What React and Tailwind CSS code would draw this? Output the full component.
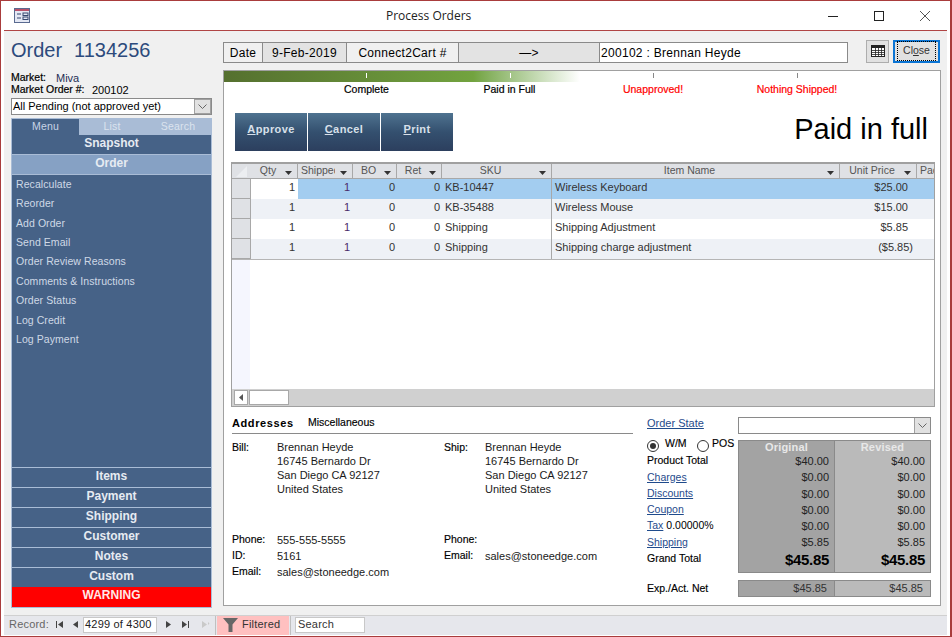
import { Fragment } from "react";

const menuLinks = [
  "Recalculate",
  "Reorder",
  "Add Order",
  "Send Email",
  "Order Review Reasons",
  "Comments & Instructions",
  "Order Status",
  "Log Credit",
  "Log Payment",
];

const bottomLinks = ["Items", "Payment", "Shipping", "Customer", "Notes", "Custom"];

const columns = [
  { label: "Qty", cls: "w-[47px]" },
  { label: "Shipped", cls: "w-[55px]", textCls: "ml-[3px] w-[34px]" },
  { label: "BO", cls: "w-[44px]" },
  { label: "Ret", cls: "w-[45px]" },
  { label: "SKU", cls: "w-[110px]" },
  { label: "Item Name", cls: "w-[288px]" },
  { label: "Unit Price", cls: "w-[77px]" },
];

const rows = [
  { sku: "KB-10447", name: "Wireless Keyboard", price: "$25.00" },
  { sku: "KB-35488", name: "Wireless Mouse", price: "$15.00" },
  { sku: "Shipping", name: "Shipping Adjustment", price: "$5.85" },
  { sku: "Shipping", name: "Shipping charge adjustment", price: "($5.85)" },
];

const totals = [
  { label: "Product Total", orig: "$40.00", rev: "$40.00" },
  { label: "Charges", orig: "$0.00", rev: "$0.00", link: true },
  { label: "Discounts", orig: "$0.00", rev: "$0.00", link: true },
  { label: "Coupon", orig: "$0.00", rev: "$0.00", link: true },
  { label: "Tax", orig: "$0.00", rev: "$0.00", link: true, extra: "0.00000%" },
  { label: "Shipping", orig: "$5.85", rev: "$5.85", link: true },
];

const SortArrow = () => (
  <svg width="7" height="4" viewBox="0 0 7 4" className="shrink-0 ml-auto mt-[3px]">
    <path d="M0 0h7L3.5 4z" fill="#333" />
  </svg>
);

const Chevron = () => (
  <svg width="9" height="5" viewBox="0 0 9 5" fill="none" stroke="#666">
    <path d="M.5.5l4 4 4-4" />
  </svg>
);

const NavIcon = ({ d, color = "#444" }) => (
  <svg width="9" height="9" viewBox="0 0 9 9">
    <path d={d} fill={color} />
  </svg>
);

const Radio = ({ checked }) => (
  <span className="w-[12px] h-[12px] rounded-full border border-[#333] bg-white flex items-center justify-center shrink-0">
    {checked && <span className="w-[6px] h-[6px] rounded-full bg-[#333]" />}
  </span>
);

const ActionButton = ({ first, rest }) => (
  <button className="w-[72px] h-[38px] pb-[5px] text-[11px] font-bold tracking-[0.4px] text-[#d8e0ea] bg-gradient-to-b from-[#4f7390] via-[#34506f] to-[#2c3f5e]">
    <span className="underline">{first}</span>
    {rest}
  </button>
);

export default function App() {
  return (
    <div className="w-[952px] h-[637px] box-border border border-r-2 border-[#a93c3c] bg-white px-[3px] flex flex-col text-[11px] text-black overflow-hidden font-['Liberation_Sans',Arial,sans-serif]">
      {/* title bar */}
      <div className="h-[30px] shrink-0 flex items-center border-b border-[#b04545] pl-[10px]">
        <svg width="17" height="16" viewBox="0 0 17 16">
          <rect x=".5" y=".5" width="15" height="14" fill="#e4e8f4" stroke="#5a6a90" />
          <rect x="1" y="1" width="14" height="2" fill="#b8506a" />
          <path d="M3 6h4M3 10h4" stroke="#34466e" />
          <rect x="9" y="5" width="5" height="2.5" fill="none" stroke="#34466e" />
          <rect x="9" y="9" width="5" height="2.5" fill="none" stroke="#34466e" />
        </svg>
        <div className="w-[355px] shrink-0" />
        <span className="text-[12px] text-[#222] font-['Open_Sans',sans-serif]">Process Orders</span>
        <div className="flex-1" />
        <svg width="116" height="12" viewBox="0 0 116 12" fill="none" stroke="#222" className="mr-[3px]">
          <path d="M0 6.5h10" />
          <rect x="46.5" y="1.5" width="9" height="9" />
          <path d="M92 1l10 10M102 1L92 11" stroke="#555" />
        </svg>
      </div>

      <div className="flex-1 min-h-0 bg-[#f0f0f0] flex pl-[7px]">
        {/* left column */}
        <div className="w-[201px] shrink-0 flex flex-col pt-[8px] pb-[7px]">
          <div className="flex items-center h-[22px] text-[20px] text-[#2c4a7c] leading-none">
            <span className="w-[63px]">Order</span>
            <span>1134256</span>
          </div>
          <div className="flex mt-[11px] h-[12px] items-center">
            <span className="w-[45px] text-[10.5px] [-webkit-text-stroke:0.2px_black]">Market:</span>
            <span className="text-[#1f2f55]">Miva</span>
          </div>
          <div className="flex h-[12px] items-center">
            <span className="w-[81px] text-[10.5px] [-webkit-text-stroke:0.2px_black]">Market Order #:</span>
            <span>200102</span>
          </div>
          <div className="mt-[2px] h-[17px] border border-[#8a8a8a] bg-white flex items-center justify-between">
            <span className="pl-[1px]">All Pending (not approved yet)</span>
            <span className="w-[17px] h-[15px] bg-[#e1e1e1] border border-[#a0a0a0] flex items-center justify-center">
              <Chevron />
            </span>
          </div>
          <div className="mt-[3px] flex-1 flex flex-col border border-[#a9bcd6] bg-[#466287] text-[#e6ebf2]">
            <div className="h-[16px] shrink-0 flex bg-[#a9bcd6] text-[10.5px] tracking-[0.2px] items-center">
              <span className="w-[67px] h-full bg-[#466287] text-[#c8d4e6] flex items-center justify-center">Menu</span>
              <span className="w-[66px] text-[#dbe3ee] text-center">List</span>
              <span className="w-[66px] text-[#dbe3ee] text-center">Search</span>
            </div>
            <div className="h-[20px] shrink-0 flex items-center justify-center pb-[3px] text-[12px] font-bold border-b border-[#a9bcd6]">Snapshot</div>
            <div className="h-[20px] shrink-0 flex items-center justify-center pb-[3px] text-[12px] font-bold bg-[#86a1c4] border-b border-[#a9bcd6]">Order</div>
            <div className="flex flex-col pl-[4px] text-[#cfd9e6] text-[10.5px] tracking-[0.07px]">
              {menuLinks.map((item) => (
                <div key={item} className="h-[19.4px] flex items-center">{item}</div>
              ))}
            </div>
            <div className="flex-1" />
            {bottomLinks.map((item) => (
              <div key={item} className="h-[20px] shrink-0 flex items-center justify-center pb-[4px] text-[12px] font-bold border-t border-[#a9bcd6]">{item}</div>
            ))}
            <div className="h-[20px] shrink-0 flex items-center justify-center pb-[4px] text-[12px] font-bold bg-[#ff0000] text-[#ffe8e8]">WARNING</div>
          </div>
        </div>

        {/* right column */}
        <div className="w-[718px] ml-[11px] shrink-0 flex flex-col pt-[8px]">
          <div className="flex h-[24px] items-center">
            <div className="flex h-[21px] border border-[#8a8a8a] text-[12px] tracking-[0.3px] mt-[3px]">
              <span className="w-[39px] flex items-center justify-center border-r border-[#8a8a8a]">Date</span>
              <span className="w-[84px] flex items-center justify-center bg-[#e3e3e3] border-r border-[#8a8a8a]">9-Feb-2019</span>
              <span className="w-[112px] flex items-center justify-center border-r border-[#8a8a8a]">Connect2Cart #</span>
              <span className="w-[141px] flex items-center justify-center bg-[#e3e3e3] border-r border-[#8a8a8a]">—&gt;</span>
              <span className="w-[247px] flex items-center pl-[1px] bg-white">200102 : Brennan Heyde</span>
            </div>
            <button className="ml-[18px] w-[23px] h-[23px] bg-[#e1e1e1] border border-[#adadad] flex items-center justify-center">
              <svg width="14" height="12" viewBox="0 0 14 12">
                <rect x=".5" y=".5" width="13" height="11" fill="#fff" stroke="#222" />
                <rect x="0" y="0" width="14" height="3" fill="#222" />
                <path d="M4.5 3v8M7.5 3v8M10.5 3v8M1 5.5h12M1 7.5h12M1 9.5h12" stroke="#222" strokeWidth=".8" />
              </svg>
            </button>
            <button className="ml-[4px] w-[47px] h-[23px] bg-[#e1e1e1] border-2 border-[#0a74d4] flex items-center justify-center text-[10.5px] text-[#333]">
              <span className="border border-dotted border-black px-[5px] py-[1px]">
                Cl<span className="underline">o</span>se
              </span>
            </button>
          </div>

          <div className="mt-[7px] w-[718px] h-[536px] bg-white border border-[#a0a0a0] flex flex-col">
            <div className="relative h-[11px] shrink-0">
              <div className="h-full w-[356px] bg-gradient-to-r from-[#55702f] via-[#72a33f] via-70% to-white" />
              <span className="absolute left-[142px] top-[2px] w-px h-[5px] bg-white" />
              <span className="absolute left-[286px] top-[2px] w-px h-[5px] bg-white" />
              <span className="absolute left-[429px] top-[2px] w-px h-[5px] bg-[#888]" />
              <span className="absolute left-[573px] top-[2px] w-px h-[5px] bg-[#888]" />
            </div>
            <div className="flex h-[16px] pl-[71px] items-center text-[10.5px] [-webkit-text-stroke:0.2px]">
              <span className="w-[143px] text-center">Complete</span>
              <span className="w-[143px] text-center">Paid in Full</span>
              <span className="w-[144px] text-center text-[#ff0000]">Unapproved!</span>
              <span className="w-[144px] text-center text-[#ff0000]">Nothing Shipped!</span>
            </div>
            <div className="flex h-[38px] mt-[15px] pl-[11px] pr-[12px] gap-[1px] items-center shrink-0">
              <ActionButton first="A" rest="pprove" />
              <ActionButton first="C" rest="ancel" />
              <ActionButton first="P" rest="rint" />
              <div className="flex-1 text-right text-[29px] leading-none mb-[6px]">Paid in full</div>
            </div>

            {/* order items grid */}
            <div className="mt-[11px] ml-[7px] w-[704px] h-[245px] shrink-0 border border-t-2 border-[#a0a0a0] flex flex-col text-[#333] overflow-hidden">
              <div className="h-[15px] shrink-0 flex bg-[#dfe1e5] border-b border-[#a8a8a8] text-[10.5px] text-[#555]">
                <div className="w-[19px] shrink-0 flex items-center justify-center">
                  <svg width="11" height="11" viewBox="0 0 11 11">
                    <path d="M11 0v11H0z" fill="#eceef1" />
                  </svg>
                </div>
                {columns.map((col) => (
                  <div key={col.label} className={`${col.cls} shrink-0 flex items-center border-r border-[#a8a8a8] pr-[5px] overflow-hidden`}>
                    <span className={`overflow-hidden whitespace-nowrap ${col.textCls || "flex-1 text-center"}`}>{col.label}</span>
                    <SortArrow />
                  </div>
                ))}
                <div className="pl-[3px] flex items-center overflow-hidden whitespace-nowrap">Pac</div>
              </div>
              {rows.map((row, i) => (
                <div key={row.name} className={`h-[20px] shrink-0 flex ${i === 0 ? "bg-[#a3cdf0]" : i % 2 ? "bg-[#eef1f6]" : "bg-white"} ${i === 3 ? "box-content border-b border-[#b5b5b5]" : ""}`}>
                  <div className="w-[19px] shrink-0 bg-[#dfe1e5] border-r border-b border-[#a8a8a8]" />
                  <div className={`w-[47px] shrink-0 flex items-center justify-end pr-[3px] pb-[4px] ${i === 0 ? "bg-white" : ""}`}>1</div>
                  <div className="w-[55px] shrink-0 flex items-center justify-end pr-[3px] pb-[4px] text-[#4a2a6a]">1</div>
                  <div className="w-[44px] shrink-0 flex items-center justify-end pr-[2px] pb-[4px]">0</div>
                  <div className="w-[45px] shrink-0 flex items-center justify-end pr-[2px] pb-[4px]">0</div>
                  <div className="w-[110px] shrink-0 flex items-center pl-[3px] pb-[4px] border-r border-[#a8a8a8]">{row.sku}</div>
                  <div className="w-[288px] shrink-0 flex items-center pl-[3px] pb-[4px]">{row.name}</div>
                  <div className={`w-[73px] shrink-0 flex items-center justify-end pb-[4px] ${row.price.startsWith("(") ? "" : "pr-[5px]"}`}>{row.price}</div>
                </div>
              ))}
              <div className="flex-1 flex min-h-0">
                <div className="w-[18px] bg-[#f5f6fe]" />
              </div>
              <div className="h-[17px] shrink-0 bg-[#d0d0d0] flex items-center pl-[2px] gap-[1px]">
                <span className="w-[14px] h-[15px] bg-white border border-[#a8a8a8] flex items-center justify-center">
                  <svg width="4" height="7" viewBox="0 0 4 7"><path d="M4 0v7L0 3.5z" fill="#555" /></svg>
                </span>
                <span className="w-[40px] h-[15px] bg-white border border-[#a8a8a8]" />
              </div>
            </div>

            {/* addresses and totals */}
            <div className="flex-1 flex pl-[8px]">
              <div className="w-[401px] shrink-0 pt-[10px]">
                <div className="flex h-[17px] items-center border-b border-[#8a8a8a] pb-[4px]">
                  <span className="w-[76px] font-bold tracking-[0.6px]">Addresses</span>
                  <span className="[-webkit-text-stroke:0.15px] text-[10.5px]">Miscellaneous</span>
                </div>
                <div className="flex mt-[6px]">
                  <div className="w-[212px] shrink-0">
                    <div className="flex h-[92px]">
                      <span className="w-[45px] text-[10.5px] [-webkit-text-stroke:0.15px]">Bill:</span>
                      <div className="leading-[14px] text-[#1a1a1a]">
                        <div>Brennan Heyde</div>
                        <div>16745 Bernardo Dr</div>
                        <div>San Diego CA 92127</div>
                        <div>United States</div>
                      </div>
                    </div>
                    <div className="grid grid-cols-[45px_1fr] auto-rows-[16px] items-center">
                      {[["Phone:", "555-555-5555"], ["ID:", "5161"], ["Email:", "sales@stoneedge.com"]].map(([label, value]) => (
                        <Fragment key={label}>
                          <span className="text-[10.5px] [-webkit-text-stroke:0.15px]">{label}</span>
                          <span className="text-[#1a1a1a]">{value}</span>
                        </Fragment>
                      ))}
                    </div>
                  </div>
                  <div className="flex-1">
                    <div className="flex h-[92px]">
                      <span className="w-[41px] text-[10.5px] [-webkit-text-stroke:0.15px]">Ship:</span>
                      <div className="leading-[14px] text-[#1a1a1a]">
                        <div>Brennan Heyde</div>
                        <div>16745 Bernardo Dr</div>
                        <div>San Diego CA 92127</div>
                        <div>United States</div>
                      </div>
                    </div>
                    <div className="grid grid-cols-[41px_1fr] auto-rows-[16px] items-center">
                      <span className="text-[10.5px] [-webkit-text-stroke:0.15px]">Phone:</span>
                      <span />
                      <span className="text-[10.5px] [-webkit-text-stroke:0.15px]">Email:</span>
                      <span className="text-[#1a1a1a]">sales@stoneedge.com</span>
                    </div>
                  </div>
                </div>
              </div>

              <div className="ml-[14px] w-[284px] shrink-0 pt-[10px]">
                <div className="flex h-[17px] items-center">
                  <span className="w-[91px] text-[#1f4b8c] underline pb-[4px]">Order State</span>
                  <div className="w-[193px] h-[17px] bg-white border border-[#8a8a8a] flex justify-end">
                    <span className="w-[16px] h-full bg-[#e1e1e1] border-l border-[#a0a0a0] flex items-center justify-center">
                      <Chevron />
                    </span>
                  </div>
                </div>
                <div className="flex mt-[6px]">
                  <div className="w-[91px] shrink-0 text-[10.5px]">
                    <div className="flex items-start h-[13px] leading-[11px]">
                      <Radio checked />
                      <span className="ml-[6px] w-[32px] -mt-[2px] [-webkit-text-stroke:0.15px]">W/M</span>
                      <Radio />
                      <span className="ml-[3px] -mt-[2px] [-webkit-text-stroke:0.15px]">POS</span>
                    </div>
                    {totals.map((row) => (
                      <div key={row.label} className="h-[16.3px] flex items-center">
                        <span className={row.link ? "text-[#1f4b8c] underline" : "[-webkit-text-stroke:0.15px]"}>{row.label}</span>
                        {row.extra && <span className="ml-[3px]">{row.extra}</span>}
                      </div>
                    ))}
                    <div className="h-[16.3px] flex items-center [-webkit-text-stroke:0.15px]">Grand Total</div>
                  </div>
                  <div className="w-[193px] h-[133px] flex border border-[#8a8a8a] bg-[#8a8a8a] gap-[1px] text-[#222]">
                    {["orig", "rev"].map((key) => (
                      <div key={key} className={`flex-1 pr-[5px] ${key === "orig" ? "bg-[#a3a3a3]" : "bg-[#bababa]"}`}>
                        <div className="h-[12px] -mr-[5px] leading-[12px] font-bold text-[#e8e8e8] tracking-[0.2px] text-center">
                          {key === "orig" ? "Original" : "Revised"}
                        </div>
                        {totals.map((row) => (
                          <div key={row.label} className="h-[16.3px] flex items-center justify-end">{row[key]}</div>
                        ))}
                        <div className="h-[18px] flex items-center justify-end text-[15px] font-bold tracking-[-0.3px] text-black">$45.85</div>
                      </div>
                    ))}
                  </div>
                </div>
                <div className="flex mt-[7px] h-[17px] items-center">
                  <span className="w-[91px] text-[10.5px] [-webkit-text-stroke:0.15px]">Exp./Act. Net</span>
                  <div className="w-[193px] h-[17px] flex border border-[#8a8a8a] bg-[#8a8a8a] gap-[1px] text-[#333]">
                    <div className="flex-1 bg-[#a3a3a3] flex items-center justify-end pr-[7px]">$45.85</div>
                    <div className="flex-1 bg-[#bababa] flex items-center justify-end pr-[7px]">$45.85</div>
                  </div>
                </div>
              </div>
            </div>
          </div>
        </div>
      </div>

      {/* record navigator */}
      <div className="h-[20px] mb-[1px] shrink-0 bg-[#e6e7ec] border-t border-[#d0d0d0] flex items-center tracking-[0.2px]">
        <span className="ml-[5px] w-[43px] text-[#666] pb-[2px]">Record:</span>
        <span className="w-[15px] flex justify-center pb-[2px]"><NavIcon d="M1 1h1v7H1zM8 1v7L3 4.5z" /></span>
        <span className="w-[16px] flex justify-center pb-[2px]"><NavIcon d="M7 1v7L2 4.5z" /></span>
        <span className="w-[74px] h-[16px] mb-[2px] bg-white border border-[#c8c8c8] flex items-center pl-[1px] text-[#222]">4299 of 4300</span>
        <span className="ml-[4px] w-[14px] flex justify-center pb-[2px]"><NavIcon d="M2 1v7l5-3.5z" /></span>
        <span className="ml-[2px] w-[16px] flex justify-center pb-[2px]"><NavIcon d="M1 1v7l5-3.5zM7 1h1v7H7z" /></span>
        <span className="ml-[3px] w-[18px] flex justify-center pb-[2px]"><NavIcon d="M1 1v7l5-3.5zM7 2l1.5 1.5L7 5z" color="#c9c9c9" /></span>
        <div className="h-full border-l border-[#c0c0c0] ml-[1px] pl-[1px] flex items-center">
          <span className="w-[72px] h-[19px] bg-[#ffc0c0] flex items-center pl-[6px] pb-[2px] text-[#333]">
            <svg width="15" height="14" viewBox="0 0 15 14" className="mr-[4px]">
              <path d="M0 0h15L9.5 6.5V14h-4V6.5z" fill="#666" />
            </svg>
            Filtered
          </span>
        </div>
        <div className="h-full border-l border-[#c0c0c0] ml-[1px] pl-[4px] flex items-center">
          <span className="w-[70px] h-[16px] mb-[2px] bg-white border border-[#c8c8c8] flex items-center pl-[2px] text-[#333]">Search</span>
        </div>
      </div>
    </div>
  );
}
